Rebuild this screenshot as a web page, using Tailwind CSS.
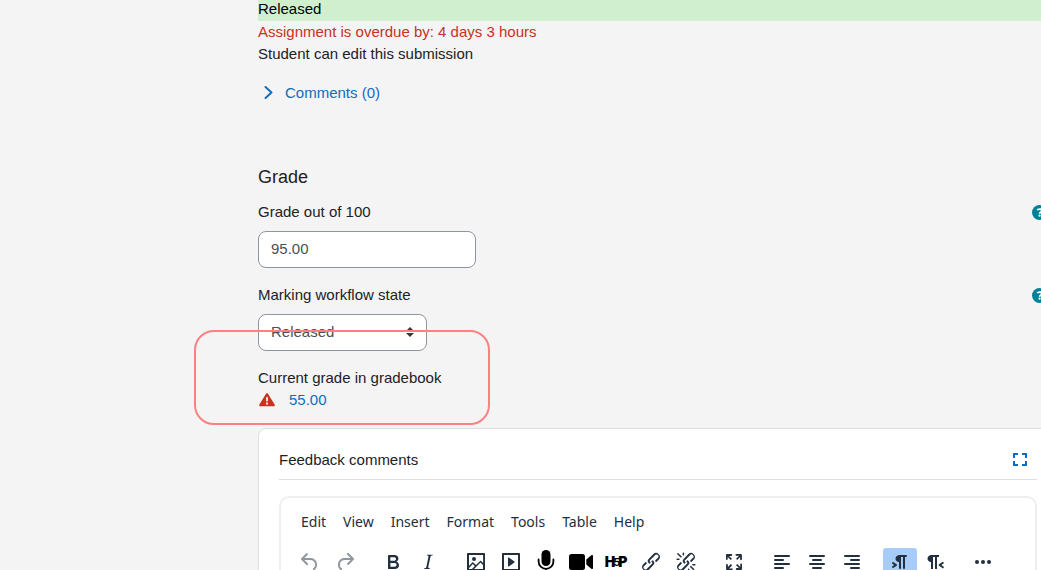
<!DOCTYPE html>
<html lang="en">
<head>
    <meta charset="UTF-8">
    <meta name="viewport" content="width=device-width, initial-scale=1.0">
    <script src="https://cdn.jsdelivr.net/npm/@tailwindcss/browser@4"></script>
    <title>Assignment grading</title>
</head>
<body class="h-screen overflow-hidden bg-[#f4f4f4] font-['Liberation_Sans',Arial,sans-serif] text-[15px] leading-[22px] text-[#1d2125]">
    <main class="ml-[258px] -mr-[17px]">
        <!-- Submission status -->
        <section>
            <div class="bg-[#cfefcf] pb-[3px] leading-[18px] text-black">Released</div>
            <div class="text-[#ca3120]">Assignment is overdue by: 4 days 3 hours</div>
            <div>Student can edit this submission</div>
            <a href="#" class="mt-[17px] flex items-center text-[#0f6cbf]">
                <svg class="mr-[7px] size-5" viewBox="0 0 20 20" fill="none" stroke="currentColor" stroke-width="2" stroke-linecap="round" stroke-linejoin="round"><path d="m7.5 4 6 5.5-6 5.5"/></svg>
                Comments (0)
            </a>
        </section>

        <!-- Grade form -->
        <form class="pt-[61px]">
            <h3 class="text-lg leading-6">Grade</h3>

            <div class="mt-3 flex items-center justify-between pr-[11px]">
                <label for="grade">Grade out of 100</label>
                <button type="button" aria-label="Help with grade" class="text-[#008196]">
                    <svg class="size-[15px]" viewBox="0 0 512 512" fill="currentColor"><circle cx="256" cy="256" r="256"/><path fill="none" stroke="#fff" stroke-width="62" d="M182 182c10-34 42-44 76-44 44 0 76 22 76 58 0 54-76 50-76 104"/><circle cx="258" cy="366" r="38" fill="#fff"/></svg>
                </button>
            </div>
            <input id="grade" type="text" value="95.00" class="mt-2 block h-[37px] w-[218px] rounded-lg border border-[#8f959e] bg-white px-3 pb-0.5 text-[#495057]">

            <div class="mt-4 flex items-center justify-between pr-[11px]">
                <label for="workflow">Marking workflow state</label>
                <button type="button" aria-label="Help with marking workflow state" class="text-[#008196]">
                    <svg class="size-[15px]" viewBox="0 0 512 512" fill="currentColor"><circle cx="256" cy="256" r="256"/><path fill="none" stroke="#fff" stroke-width="62" d="M182 182c10-34 42-44 76-44 44 0 76 22 76 58 0 54-76 50-76 104"/><circle cx="258" cy="366" r="38" fill="#fff"/></svg>
                </button>
            </div>
            <div class="relative mt-2 w-[169px]">
                <select id="workflow" class="block h-[37px] w-full appearance-none rounded-lg border border-[#8f959e] bg-white px-3 pb-0.5 text-[#495057]">
                    <option>Released</option>
                </select>
                <svg class="pointer-events-none absolute top-[13px] right-[13px] h-[10px] w-2" viewBox="0 0 4 5" fill="#343a40"><path d="M2 0 0 2h4zm0 5L0 3h4z"/></svg>
            </div>

            <div class="relative mt-4">
                <div>Current grade in gradebook</div>
                <div class="flex items-center">
                    <svg class="mx-px size-4" viewBox="0 0 16 16" role="img" aria-label="Warning"><path fill="#ca3120" d="M7 1.8a1.2 1.2 0 0 1 2 0l6.6 10.8c.5.8 0 1.7-.9 1.7H1.3c-.9 0-1.4-.9-.9-1.7z"/><path fill="#fff" d="M7 5.2h2l-.3 4.4H7.3z"/><circle cx="8" cy="11.6" r="1.1" fill="#fff"/></svg>
                    <a href="#" class="ml-[13px] text-[#0f6cbf]">55.00</a>
                </div>
                <!-- Callout ring -->
                <div class="pointer-events-none absolute -top-[37px] -left-16 h-[95px] w-[296px] rounded-[20px] border-2 border-[#ff8080]"></div>
            </div>
        </form>

        <!-- Feedback comments -->
        <section class="mt-[17px] rounded-lg border border-[#dedede] bg-white px-5 pt-5 pb-5">
            <div class="flex items-center justify-between border-b border-[#dfdfdf] pb-2">
                <h4>Feedback comments</h4>
                <button type="button" aria-label="Expand" class="mr-[10px] text-[#0f6cbf]">
                    <svg class="size-[14px]" viewBox="0 0 14 14" fill="none" stroke="currentColor" stroke-width="2"><path d="M1 5V1h4M9 1h4v4M13 8v4H9M5 12H1V8"/></svg>
                </button>
            </div>

            <div class="mt-4 rounded-[10px] border-2 border-[#eee]">
                <div class="flex gap-[17px] px-5 pt-3 font-['Noto_Sans',sans-serif] text-[14px] leading-6 text-[#222f3e]">
                    <button type="button">Edit</button>
                    <button type="button">View</button>
                    <button type="button">Insert</button>
                    <button type="button">Format</button>
                    <button type="button">Tools</button>
                    <button type="button">Table</button>
                    <button type="button">Help</button>
                </div>

                <div class="mt-[14px] flex gap-[14px] px-3 text-[#222f3e] [&_button]:flex [&_button]:h-7 [&_button]:w-[34px] [&_button]:items-center [&_button]:justify-center [&_button]:rounded-[3px] [&_svg]:size-6 [&_svg]:fill-current">
                    <div class="flex gap-px text-[#222f3e]/50">
                        <button type="button" aria-label="Undo" disabled><svg viewBox="0 0 24 24"><path d="M6.4 8H12c3.7 0 6.2 2 6.8 5.1.6 2.7-.4 5.6-2.3 6.8a1 1 0 0 1-1-1.8c1.1-.6 1.8-2.7 1.4-4.6-.5-2.1-2.1-3.5-4.9-3.5H6.4l3.3 3.3a1 1 0 1 1-1.4 1.4l-5-5a1 1 0 0 1 0-1.4l5-5a1 1 0 0 1 1.4 1.4L6.4 8Z"/></svg></button>
                        <button type="button" aria-label="Redo" disabled><svg viewBox="0 0 24 24"><path d="M17.6 10H12c-2.8 0-4.4 1.4-4.9 3.5-.4 2 .3 4 1.4 4.6a1 1 0 1 1-1 1.8c-2-1.2-2.9-4.1-2.3-6.8.6-3 3-5.1 6.8-5.1h5.6l-3.3-3.3a1 1 0 1 1 1.4-1.4l5 5a1 1 0 0 1 0 1.4l-5 5a1 1 0 0 1-1.4-1.4l3.3-3.3Z"/></svg></button>
                    </div>
                    <div class="flex gap-px">
                        <button type="button" aria-label="Bold"><svg viewBox="0 0 24 24"><path fill-rule="evenodd" d="M7.8 19c-.3 0-.5 0-.6-.2l-.2-.5V5.7c0-.2 0-.4.2-.5l.6-.2h5c1.5 0 2.7.3 3.5 1 .7.6 1.1 1.4 1.1 2.5a3 3 0 0 1-.6 1.9c-.4.6-1 1-1.6 1.2.4.1.9.3 1.3.6s.8.7 1 1.2c.4.4.5 1 .5 1.6 0 1.3-.4 2.3-1.3 3-.8.7-2.1 1-3.8 1H7.8Zm5-8.3c.6 0 1.2-.1 1.6-.5.4-.3.6-.7.6-1.3 0-1.1-.8-1.7-2.3-1.7H9.3v3.5h3.4Zm.5 6c.7 0 1.3-.1 1.7-.4.4-.4.6-.9.6-1.5s-.2-1-.7-1.4c-.4-.3-1-.4-2-.4H9.4v3.8h4Z"/></svg></button>
                        <button type="button" aria-label="Italic"><svg viewBox="0 0 24 24"><path d="m16.7 4.7-.1.9h-.3c-.6 0-1 0-1.4.3-.3.3-.4.6-.5 1.1l-2.1 9.8v.6c0 .5.4.8 1.4.8h.2l-.2.8H8l.2-.8h.2c1.1 0 1.8-.5 2-1.5l2-9.8.1-.5c0-.6-.4-.8-1.4-.8h-.3l.2-.9h5.8Z"/></svg></button>
                    </div>
                    <div class="flex gap-px">
                        <button type="button" aria-label="Image"><svg viewBox="0 0 24 24"><path fill-rule="evenodd" d="m5 15.7 3.3-3.2c.3-.3.7-.3 1 0L12 15l4.1-4c.3-.4.8-.4 1 0l2 1.9V5H5v10.7ZM5 18V19h3l2.8-2.9-2-2L5 17.9Zm14-3-2.5-2.4-6.4 6.5H19v-4ZM4 3h16c.6 0 1 .4 1 1v16c0 .6-.4 1-1 1H4a1 1 0 0 1-1-1V4c0-.6.4-1 1-1Zm6 8a2 2 0 1 0 0-4 2 2 0 0 0 0 4Z"/></svg></button>
                        <button type="button" aria-label="Multimedia"><svg viewBox="0 0 24 24"><path fill-rule="evenodd" d="M4 3h16c.6 0 1 .4 1 1v16c0 .6-.4 1-1 1H4a1 1 0 0 1-1-1V4c0-.6.4-1 1-1Zm1 2v14h14V5H5Zm4.8 2.6 5.6 4a.5.5 0 0 1 0 .8l-5.6 4A.5.5 0 0 1 9 16V8a.5.5 0 0 1 .8-.4Z"/></svg></button>
                        <button type="button" aria-label="Record audio" class="text-black"><svg viewBox="0 0 24 24"><rect x="7.5" y="0" width="9" height="16" rx="4.5"/><path fill="none" stroke="currentColor" stroke-width="1.8" stroke-linecap="round" d="M4.6 9.5v2a7.4 7.4 0 0 0 14.8 0v-2M12 19v4M8 23h8"/></svg></button>
                        <button type="button" aria-label="Record video" class="text-black"><svg viewBox="0 0 24 24"><rect x="0" y="4" width="16" height="16" rx="2.5"/><path d="m17.3 9.4 5-4.1c.8-.5 1.7-.1 1.7.8v11.8c0 .9-.9 1.3-1.7.8l-5-4.1z"/></svg></button>
                        <button type="button" aria-label="Configure H5P content" class="font-['Inter',sans-serif] text-[14px] font-black text-black">H<span class="-mx-0.5 text-[11px] font-bold">5</span>P</button>
                        <button type="button" aria-label="Link"><svg viewBox="0 0 24 24"><path d="M6.2 12.3a1 1 0 0 1 1.4 1.4l-2 2a2 2 0 1 0 2.6 2.8l4.8-4.8a1 1 0 0 0 0-1.4 1 1 0 1 1 1.4-1.3 2.9 2.9 0 0 1 0 4L9.6 20a3.9 3.9 0 0 1-5.5-5.5l2-2Zm11.6-.6a1 1 0 0 1-1.4-1.4l2-2a2 2 0 1 0-2.6-2.8L11 10.3a1 1 0 0 0 0 1.4A1 1 0 1 1 9.6 13a2.9 2.9 0 0 1 0-4L14.4 4a3.9 3.9 0 0 1 5.5 5.5l-2 2Z"/></svg></button>
                        <button type="button" aria-label="Unlink"><svg viewBox="0 0 24 24"><path d="M6.2 12.3a1 1 0 0 1 1.4 1.4l-2 2a2 2 0 1 0 2.6 2.8l4.8-4.8a1 1 0 0 0 0-1.4 1 1 0 1 1 1.4-1.3 2.9 2.9 0 0 1 0 4L9.6 20a3.9 3.9 0 0 1-5.5-5.5l2-2Zm11.6-.6a1 1 0 0 1-1.4-1.4l2.1-2a2 2 0 1 0-2.7-2.8L11 10.3a1 1 0 0 0 0 1.4A1 1 0 1 1 9.6 13a2.9 2.9 0 0 1 0-4L14.4 4a3.9 3.9 0 0 1 5.5 5.5l-2 2ZM7.6 6.3a.8.8 0 0 1-1 1.1L3.3 4.2a.7.7 0 1 1 1-1l3.2 3.1ZM5.1 8.6a.8.8 0 0 1 0 1.5H3a.8.8 0 0 1 0-1.5H5Zm5-3.5a.8.8 0 0 1-1.5 0V3a.8.8 0 0 1 1.5 0V5Zm6 11.8a.8.8 0 0 1 1-1l3.2 3.2a.8.8 0 0 1-1 1L16 17Zm-2.2 2a.8.8 0 0 1 1.5 0V21a.8.8 0 0 1-1.5 0V19Zm5-3.5a.7.7 0 1 1 0-1.5H21a.8.8 0 0 1 0 1.5H19Z"/></svg></button>
                    </div>
                    <div class="flex gap-px">
                        <button type="button" aria-label="Fullscreen"><svg viewBox="0 0 24 24"><path d="m15.3 10-1.2-1.3 2.9-3h-2.3a.9.9 0 1 1 0-1.7H19c.5 0 .9.4.9.9v4.4a.9.9 0 1 1-1.8 0V7l-2.9 3Zm0 4 3 3v-2.3a.9.9 0 1 1 1.7 0V19c0 .5-.4.9-.9.9h-4.4a.9.9 0 1 1 0-1.8H17l-3-2.9 1.3-1.2ZM10 15.4l-2.9 3h2.3a.9.9 0 1 1 0 1.7H5a.9.9 0 0 1-.9-.9v-4.4a.9.9 0 1 1 1.8 0V17l2.9-3 1.2 1.3ZM8.7 10 5.7 7v2.3a.9.9 0 0 1-1.7 0V5c0-.5.4-.9.9-.9h4.4a.9.9 0 0 1 0 1.8H7l3 2.9-1.3 1.2Z"/></svg></button>
                    </div>
                    <div class="flex gap-px">
                        <button type="button" aria-label="Align left"><svg viewBox="0 0 24 24"><path d="M5 5h14a1 1 0 0 1 0 2H5a1 1 0 1 1 0-2Zm0 4h8a1 1 0 0 1 0 2H5a1 1 0 1 1 0-2Zm0 8h8a1 1 0 0 1 0 2H5a1 1 0 0 1 0-2Zm0-4h14a1 1 0 0 1 0 2H5a1 1 0 0 1 0-2Z"/></svg></button>
                        <button type="button" aria-label="Align center"><svg viewBox="0 0 24 24"><path d="M5 5h14a1 1 0 0 1 0 2H5a1 1 0 1 1 0-2Zm3 4h8a1 1 0 0 1 0 2H8a1 1 0 1 1 0-2Zm0 8h8a1 1 0 0 1 0 2H8a1 1 0 0 1 0-2Zm-3-4h14a1 1 0 0 1 0 2H5a1 1 0 0 1 0-2Z"/></svg></button>
                        <button type="button" aria-label="Align right"><svg viewBox="0 0 24 24"><path d="M5 5h14a1 1 0 0 1 0 2H5a1 1 0 1 1 0-2Zm6 4h8a1 1 0 0 1 0 2h-8a1 1 0 0 1 0-2Zm0 8h8a1 1 0 0 1 0 2h-8a1 1 0 0 1 0-2Zm-6-4h14a1 1 0 0 1 0 2H5a1 1 0 0 1 0-2Z"/></svg></button>
                    </div>
                    <div class="flex gap-px">
                        <button type="button" aria-label="Left to right" aria-pressed="true" class="bg-[#a6ccf7]"><svg viewBox="0 0 24 24"><path d="M11 5h7a1 1 0 0 1 0 2h-1v11a1 1 0 0 1-2 0V7h-2v11a1 1 0 0 1-2 0v-6c-.5 0-1 0-1.4-.3A3.4 3.4 0 0 1 7.8 10a3.3 3.3 0 0 1 0-2.8 3.4 3.4 0 0 1 1.8-1.8L11 5ZM4.4 16.2 6.2 15l-1.8-1.2a1 1 0 0 1 1.2-1.6l3 2a1 1 0 0 1 0 1.6l-3 2a1 1 0 1 1-1.2-1.6Z"/></svg></button>
                        <button type="button" aria-label="Right to left"><svg viewBox="0 0 24 24"><path d="M8 5h8v2h-2v12h-2V7h-2v12H8v-7c-.5 0-1 0-1.4-.3A3.4 3.4 0 0 1 4.8 10a3.3 3.3 0 0 1 0-2.8 3.4 3.4 0 0 1 1.8-1.8L8 5Zm12 11.2a1 1 0 1 1-1 1.6l-3-2a1 1 0 0 1 0-1.6l3-2a1 1 0 1 1 1 1.6L18.4 15l1.6 1.2Z"/></svg></button>
                    </div>
                    <div class="flex gap-px">
                        <button type="button" aria-label="More"><svg viewBox="0 0 24 24"><circle cx="6" cy="12" r="2"/><circle cx="12" cy="12" r="2"/><circle cx="18" cy="12" r="2"/></svg></button>
                    </div>
                </div>

                <textarea aria-label="Feedback comments" class="mt-2 block h-64 w-full p-4"></textarea>
            </div>
        </section>
    </main>
</body>
</html>
